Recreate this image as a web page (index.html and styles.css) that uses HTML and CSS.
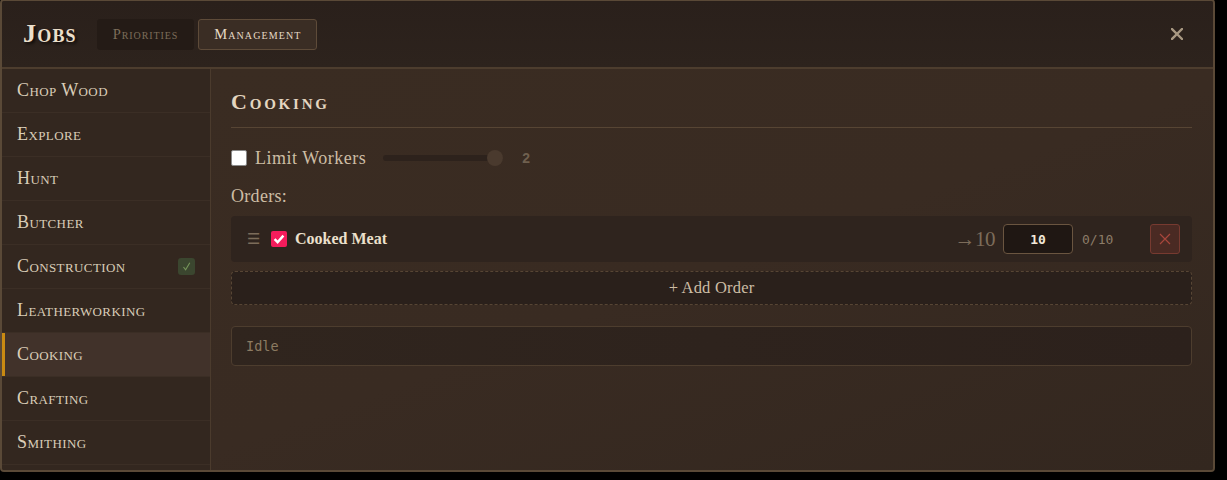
FILE: index.html
```html
<!DOCTYPE html>
<html>
<head>
<meta charset="utf-8">
<link rel="stylesheet" href="styles.css">
</head>
<body>
<div class="modal">
  <header class="modal-header">
    <h1 class="title">Jobs</h1>
    <nav class="tabs">
      <button class="tab">Priorities</button>
      <button class="tab tab-active">Management</button>
    </nav>
    <button class="close" aria-label="Close">
      <svg width="12" height="12" viewBox="0 0 12 12"><path d="M1 1L11 11M11 1L1 11" stroke="#a89882" stroke-width="2.4" stroke-linecap="square"/></svg>
    </button>
  </header>
  <div class="modal-body">
    <aside class="sidebar">
      <div class="job">Chop Wood</div>
      <div class="job">Explore</div>
      <div class="job">Hunt</div>
      <div class="job">Butcher</div>
      <div class="job">Construction <span class="badge"><svg width="11" height="11" viewBox="0 0 11 11"><path d="M2.5 6L4.6 8.8L8.8 1.8" fill="none" stroke="#76955a" stroke-width="1.1"/></svg></span></div>
      <div class="job">Leatherworking</div>
      <div class="job job-active">Cooking</div>
      <div class="job">Crafting</div>
      <div class="job">Smithing</div>
    </aside>
    <main class="content">
      <h2 class="heading">Cooking</h2>
      <div class="limit-row">
        <span class="box"></span>
        <span class="limit-label">Limit Workers</span>
        <input class="slider" type="range" min="0" max="2" value="2">
        <span class="limit-value">2</span>
      </div>
      <div class="orders-label">Orders:</div>
      <div class="order">
        <span class="handle">☰</span>
        <span class="box box-checked"><svg width="16" height="16" viewBox="0 0 16 16"><path d="M3.6 8.2L6.6 11.2L12.4 4.6" fill="none" stroke="#fff" stroke-width="2.4"/></svg></span>
        <span class="order-name">Cooked Meat</span>
        <span class="order-target">→10</span>
        <span class="qty">10</span>
        <span class="progress">0/10</span>
        <button class="delete" aria-label="Delete"><svg width="12" height="12" viewBox="0 0 12 12"><path d="M1 1L11 11M11 1L1 11" stroke="#a8463b" stroke-width="1.2"/></svg></button>
      </div>
      <button class="add-order">+ Add Order</button>
      <div class="status">Idle</div>
    </main>
  </div>
</div>
</body>
</html>
```
FILE: styles.css
```css
* { box-sizing: border-box; }
html, body { margin: 0; padding: 0; background: #000; }
body { width: 1227px; height: 480px; overflow: hidden; font-family: "Liberation Serif", serif; }

.modal {
  width: 1215px;
  height: 473px;
  margin-top: -1px;
  border: 2px solid #5a4937;
  border-radius: 4px;
  background: #34281f;
  display: flex;
  flex-direction: column;
  overflow: hidden;
}

.modal-header {
  height: 68px;
  flex: none;
  display: flex;
  align-items: center;
  padding: 0 30px 0 21px;
  background: linear-gradient(180deg, #2a201b, #2d231d);
  border-bottom: 2px solid #4d3d2e;
}
.title {
  margin: 0;
  font-size: 26px;
  font-weight: bold;
  font-variant: small-caps;
  letter-spacing: 1.2px;
  color: #ebdfca;
  text-shadow: 2px 2px 3px rgba(0,0,0,0.7);
}
.tabs { display: flex; gap: 4px; margin-left: 20px; }
.tab {
  height: 31px;
  padding: 0 15px;
  font-family: "Liberation Serif", serif;
  font-size: 14.5px;
  font-variant: small-caps;
  letter-spacing: 0.9px;
  color: #7d6d5a;
  background: #241b16;
  border: 1px solid #241b16;
  border-radius: 3px;
}
.tab-active {
  padding: 0 15px;
  letter-spacing: 1.1px;
  color: #e6dac6;
  background: #3a2d24;
  border-color: #5e4b39;
}
.close {
  margin-left: auto;
  background: none;
  border: 0;
  padding: 0;
  display: flex;
}

.modal-body { flex: 1; display: flex; min-height: 0; }

.sidebar {
  width: 209px;
  flex: none;
  background: #33271f;
  border-right: 1px solid #4b3b2d;
}
.job {
  height: 44px;
  display: flex;
  align-items: center;
  padding: 0 15px;
  border-bottom: 1px solid #3b2e25;
  font-size: 18px;
  font-variant: small-caps;
  letter-spacing: 0.4px;
  color: #dacdb8;
}
.job-active {
  background: #41322a;
  box-shadow: inset 3px 0 0 #c98a12;
}
.badge {
  margin-left: auto;
  width: 17px;
  height: 17px;
  border-radius: 3px;
  background: #3b462f;
  display: flex;
  align-items: center;
  justify-content: center;
}

.content {
  flex: 1;
  padding: 20px 21px 20px 20px;
  background: linear-gradient(160deg, #3a2c22 0%, #392b22 50%, #33271f 100%);
}
.heading {
  margin: 0;
  padding-bottom: 12px;
  border-bottom: 1px solid #574534;
  font-size: 22px;
  font-weight: bold;
  font-variant: small-caps;
  letter-spacing: 2.8px;
  line-height: 26px;
  color: #e4d6c0;
}

.limit-row {
  display: flex;
  align-items: center;
  margin-top: 21px;
  height: 18px;
}
.box {
  width: 16px;
  height: 16px;
  flex: none;
  background: #fff;
  border: 1px solid #8a8a8a;
  border-radius: 2px;
  display: flex;
}
.limit-label {
  margin-left: 8px;
  font-size: 18px;
  letter-spacing: 0.5px;
  color: #cdbda5;
}
.slider {
  -webkit-appearance: none;
  appearance: none;
  width: 120px;
  height: 6px;
  margin: 0 0 0 17px;
  background: #2d221c;
  border-radius: 3px;
  outline: none;
}
.slider::-webkit-slider-thumb {
  -webkit-appearance: none;
  width: 16px;
  height: 16px;
  border-radius: 50%;
  background: #4a3a2e;
  border: 0;
}
.limit-value {
  margin-left: 19px;
  font-family: "Liberation Sans", sans-serif;
  font-weight: bold;
  font-size: 14px;
  color: #6f604f;
}

.orders-label {
  margin-top: 18px;
  font-size: 18px;
  line-height: 22px;
  letter-spacing: 0.3px;
  color: #cdbda5;
}

.order {
  margin-top: 9px;
  height: 46px;
  display: flex;
  align-items: center;
  padding: 0 12px 0 16px;
  background: #2f241e;
  border-radius: 4px;
}
.handle {
  font-family: "DejaVu Sans", sans-serif;
  font-size: 15px;
  color: #7c6c5a;
  width: 24px;
}
.box-checked {
  background: #f41c5c;
  border: 0;
  border-radius: 2px;
}
.order-name {
  margin-left: 8px;
  font-size: 16px;
  font-weight: bold;
  color: #ece0cc;
}
.order-target {
  margin-left: auto;
  font-size: 21px;
  letter-spacing: -0.5px;
  color: #7c6c5a;
}
.qty {
  margin-left: 8px;
  width: 70px;
  height: 30px;
  display: flex;
  align-items: center;
  justify-content: center;
  background: #1f1713;
  border: 1px solid #6a5540;
  border-radius: 4px;
  font-family: "DejaVu Sans Mono", monospace;
  font-weight: bold;
  font-size: 13px;
  color: #f2e8d8;
}
.progress {
  margin-left: 9px;
  width: 68px;
  font-family: "DejaVu Sans Mono", monospace;
  font-size: 13px;
  color: #8c7c68;
}
.delete {
  width: 30px;
  height: 30px;
  padding: 0;
  display: flex;
  align-items: center;
  justify-content: center;
  background: #4a2a23;
  border: 1px solid #773a30;
  border-radius: 3px;
}

.add-order {
  display: block;
  width: 100%;
  height: 34px;
  margin-top: 9px;
  background: #2a201b;
  border: 1px dashed #574534;
  border-radius: 4px;
  font-family: "Liberation Serif", serif;
  font-size: 16.5px;
  letter-spacing: 0.2px;
  color: #cdbda5;
}

.status {
  margin-top: 21px;
  height: 40px;
  display: flex;
  align-items: center;
  padding-left: 14px;
  background: linear-gradient(90deg, #30251e, #2c211c);
  border: 1px solid #4d3d2e;
  border-radius: 4px;
  font-family: "DejaVu Sans Mono", monospace;
  font-size: 13.5px;
  color: #8c7b62;
}
```
